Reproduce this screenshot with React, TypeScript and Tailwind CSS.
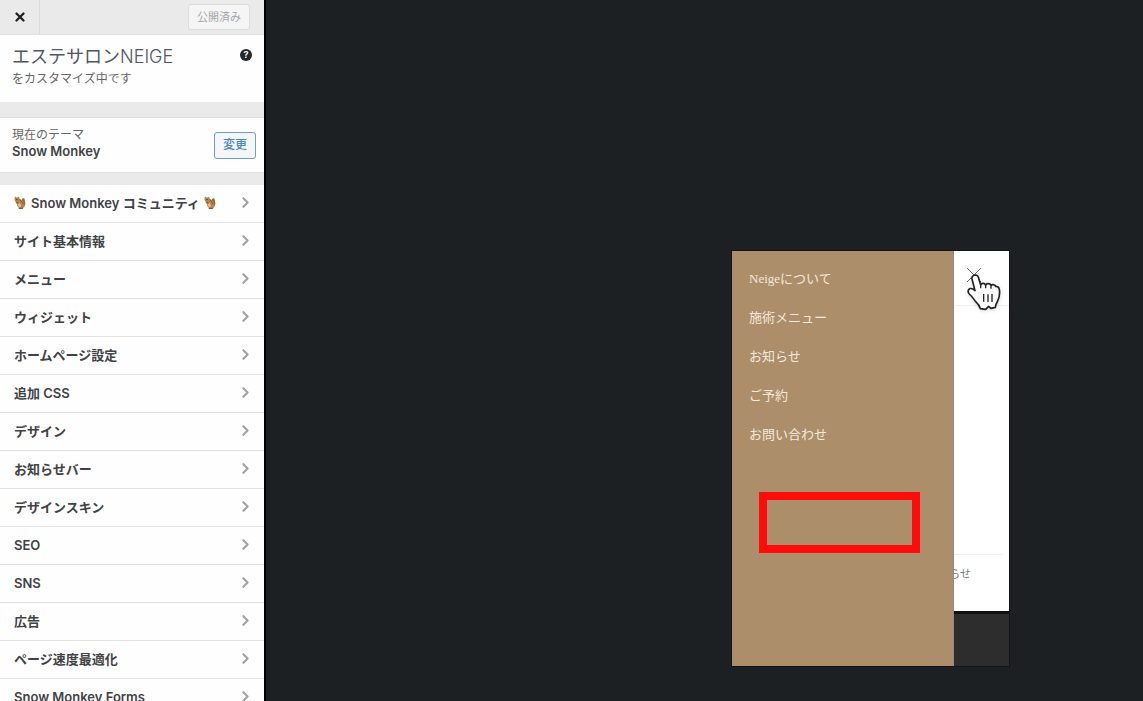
import { ChevronRight, X } from "lucide-react"

const sections = [
    "サイト基本情報",
    "メニュー",
    "ウィジェット",
    "ホームページ設定",
    "追加 CSS",
    "デザイン",
    "お知らせバー",
    "デザインスキン",
    "SEO",
    "SNS",
    "広告",
    "ページ速度最適化",
    "Snow Monkey Forms",
]

const drawerLinks = ["Neigeについて", "施術メニュー", "お知らせ", "ご予約", "お問い合わせ"]

function Chipmunk() {
    return (
        <svg viewBox="2 1 20 22" className="size-[13px] shrink-0" aria-hidden="true">
            <path d="M13 20c5 0 8-3 7-8-1-3 0-5-2-7-2-1-4 1-4 3z" fill="#94693f" />
            <path d="M3 2l3 2 3-2 2 4c4 2 8 6 8 11 0 4-4 6-8 5-3-1-5-4-5-7L3 10C1 7 2 4 3 2z" fill="#b98449" />
            <path d="M8 12c3 0 5 3 5 6 0 2-2 3-3 2-3-2-3-5-2-8z" fill="#dfbd8a" />
            <path d="M11 7l6 8" stroke="#7d5433" strokeWidth="1.5" />
            <circle cx="6" cy="7" r="1.1" fill="#33241a" />
            <path d="M9 22h7M5 12l4 1" stroke="#7d5433" strokeWidth="2" />
        </svg>
    )
}

function HandCursor() {
    return (
        <svg viewBox="78 84 108 114" className="w-9 h-[38px] drop-shadow-sm" aria-hidden="true">
            <path
                d="M103 91c5-2 10 0 12 6l7 23c2-6 11-7 15 0 3-6 13-5 16 1 4-4 12-2 15 4 4-2 9 2 10 8 2 13 1 23-5 35-3 5-6 11-7 19l-13 3-7-6-9 9-16-2c-2-9-6-14-14-21-6-8-10-15-19-23-5-5-5-13 1-16 7-2 12 2 16 6l-9-35c-1-5 1-9 6-11z"
                fill="#fff"
                stroke="#222"
                strokeWidth="5"
                strokeLinejoin="round"
            />
            <path d="M122 119v11M137 120v10M153 122v9M131 147v23M144 148v23M156 147v24" stroke="#222" strokeWidth="4" />
        </svg>
    )
}

function Sidebar() {
    return (
        <aside className="w-[266px] shrink-0 flex flex-col overflow-hidden bg-[#eaeaea] border-r-2 border-black text-[#3f4245]">
            {/* Top bar */}
            <div className="h-[35px] shrink-0 flex items-center justify-between border-b border-[#e0e0e0]">
                <button aria-label="閉じる" className="w-10 h-full flex items-center justify-center border-r border-[#dcdcdc] text-[#222]">
                    <X size={14} strokeWidth={4} />
                </button>
                <button className="h-[26px] mr-3.5 px-2 rounded-[3px] border border-[#dcdcdc] bg-[#f5f5f5] text-[#a5a8aa] text-[11px]">
                    公開済み
                </button>
            </div>

            {/* Site title */}
            <div className="h-[67px] shrink-0 flex justify-between bg-[#fefefe] px-3 pt-2.5">
                <div>
                    <h1 className="text-[18px] leading-6 font-light text-[#50575e]">
                        <span className="font-normal">エステサロン</span>NEIGE
                    </h1>
                    <p className="text-[12px] leading-5 text-[#666]">をカスタマイズ中です</p>
                </div>
                <button aria-label="ヘルプ" className="mt-1 size-3 rounded-full bg-[#25282b] text-white text-[9px] leading-3 font-bold">
                    ?
                </button>
            </div>

            {/* Current theme */}
            <div className="h-14 shrink-0 mt-[15px] flex items-center justify-between bg-[#fefefe] border-y border-[#e0e0e0] pl-3 pr-2">
                <div className="text-[12px] leading-4 pb-1">
                    <p className="text-[#666]">現在のテーマ</p>
                    <p className="text-[13px] font-semibold">Snow Monkey</p>
                </div>
                <button className="h-[27px] px-2 rounded-[3px] border border-[#6f9dcc] bg-[#f4f7fa] text-[#4a86c0] text-[12px] font-medium">
                    変更
                </button>
            </div>

            {/* Sections */}
            <ul className="mt-3 shrink-0 bg-[#fefefe] text-[13px] leading-5 font-semibold">
                <li className="h-[38px] border-b border-[#e2e2e2]">
                    <button className="w-full h-full flex items-center justify-between pl-3.5 pr-2.5 pb-0.5">
                        <span className="flex items-center gap-1">
                            <Chipmunk />
                            Snow Monkey コミュニティ
                            <Chipmunk />
                        </span>
                        <ChevronRight size={17} strokeWidth={3} className="text-[#a0a3a5]" />
                    </button>
                </li>
                {sections.map((name) => (
                    <li key={name} className="h-[38px] border-b border-[#e2e2e2]">
                        <button className="w-full h-full flex items-center justify-between pl-3.5 pr-2.5 pb-0.5">
                            {name}
                            <ChevronRight size={17} strokeWidth={3} className="text-[#a0a3a5]" />
                        </button>
                    </li>
                ))}
            </ul>
        </aside>
    )
}

function Preview() {
    return (
        <main className="flex-1 flex justify-end items-start pt-[251px] pr-[134px] bg-[#1d2023]">
            <div className="flex items-stretch outline-1 outline-[#141414]">
                {/* Drawer */}
                <nav className="w-[222px] h-[415px] bg-[#ac8e6b] border-r border-[#8f8a84] px-[17px] pt-2 font-['Liberation_Serif','Noto_Sans_CJK_JP',serif]">
                    <ul className="text-[13px] text-[#f5e8da]">
                        {drawerLinks.map((label) => (
                            <li key={label}>
                                <a href="#" className="flex items-center h-[39px]">
                                    {label}
                                </a>
                            </li>
                        ))}
                    </ul>
                    <div className="mt-[38px] ml-2.5 w-[161px] h-[61px] border-8 border-[#fd0c0c]" />
                </nav>

                {/* Page behind the drawer */}
                <div className="w-[55px] flex flex-col bg-[#2e2d2d]">
                    <div className="h-[360px] flex flex-col bg-white">
                        <div className="relative h-[55px] pt-4 pl-3 border-b border-[#f5eeee]">
                            <button aria-label="メニューを閉じる" className="block text-[#666]">
                                <svg viewBox="0 0 16 16" className="size-4" stroke="currentColor">
                                    <path d="M1 1l14 14M15 1L1 15" />
                                </svg>
                            </button>
                            <div className="absolute left-3 top-[22px]">
                                <HandCursor />
                            </div>
                        </div>
                        <div className="flex-1" />
                        <div className="h-[57px] mr-1.5 flex justify-end overflow-hidden border-t border-[#f0f0f0] pt-[11px] pr-8">
                            <p className="shrink-0 text-[11px] leading-4 text-[#777]">らせ</p>
                        </div>
                    </div>
                    <div className="h-[3px] bg-[#101010]" />
                </div>
            </div>
        </main>
    )
}

export default function App() {
    return (
        <div className="h-screen flex overflow-hidden font-[Inter,'Noto_Sans_CJK_JP',sans-serif]">
            <Sidebar />
            <Preview />
        </div>
    )
}
